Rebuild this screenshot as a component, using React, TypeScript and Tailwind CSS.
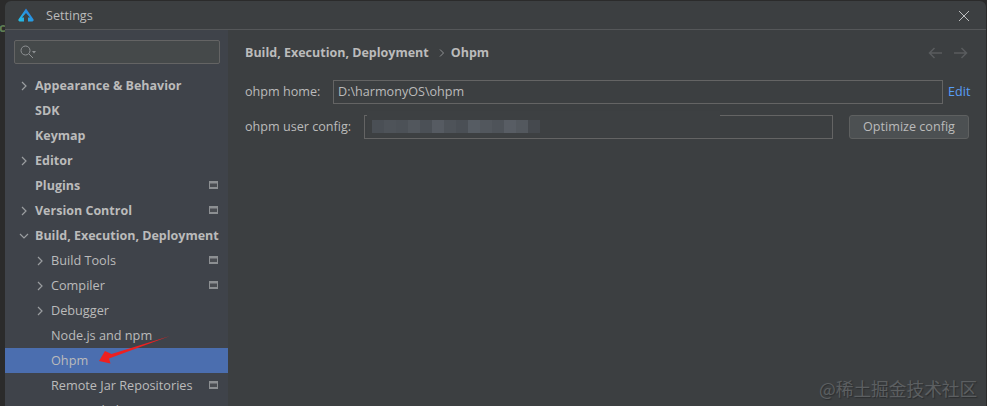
import React from "react";

const font = { fontFamily: '"Open Sans", "Noto Sans", sans-serif' };

function Chevron({ down }: { down?: boolean }) {
  return (
    <svg width="10" height="10" viewBox="0 0 10 10" fill="none" stroke="#9a9da0" strokeWidth="1.2">
      {down ? <path d="M1 3l4 4 4-4" /> : <path d="M3 1l4 4-4 4" />}
    </svg>
  );
}

function Badge() {
  return (
    <svg width="9" height="9" viewBox="0 0 9 9" className="shrink-0">
      <rect x="0" y="0" width="9" height="8" fill="#8c8f92" />
      <rect x="1" y="2.5" width="7" height="3.5" fill="#4a4d52" />
    </svg>
  );
}

type Row = { label: string; level: 0 | 1; chevron?: "r" | "d"; badge?: boolean; selected?: boolean };

const rows: Row[] = [
  { label: "Appearance & Behavior", level: 0, chevron: "r" },
  { label: "SDK", level: 0 },
  { label: "Keymap", level: 0 },
  { label: "Editor", level: 0, chevron: "r" },
  { label: "Plugins", level: 0, badge: true },
  { label: "Version Control", level: 0, chevron: "r", badge: true },
  { label: "Build, Execution, Deployment", level: 0, chevron: "d" },
  { label: "Build Tools", level: 1, chevron: "r", badge: true },
  { label: "Compiler", level: 1, chevron: "r", badge: true },
  { label: "Debugger", level: 1, chevron: "r" },
  { label: "Node.js and npm", level: 1 },
  { label: "Ohpm", level: 1, selected: true },
  { label: "Remote Jar Repositories", level: 1, badge: true },
  { label: "Required Plugins", level: 1 },
];

function TreeRow({ row }: { row: Row }) {
  return (
    <div className={`relative flex h-[25px] shrink-0 items-center pr-[10px] ${row.selected ? "bg-[#4b6eaf]" : ""}`}>
      <div className={`flex shrink-0 items-center ${row.level === 0 ? "w-[30px] pl-[14px]" : "w-[46px] pl-[30px]"}`}>
        {row.chevron ? <Chevron down={row.chevron === "d"} /> : null}
      </div>
      <span
        className={`flex-1 whitespace-nowrap leading-none text-[#bbbbbb] ${
          row.level === 0 ? "pt-[1px] text-[12.5px] font-bold" : "text-[12.7px]"
        }`}
      >
        {row.label}
      </span>
      {row.badge ? <Badge /> : null}
    </div>
  );
}

function RedArrow() {
  return (
    <svg width="80" height="40" viewBox="0 0 80 40" className="absolute left-[95px] top-[333px]">
      <path d="M75 3L16.5 21L10 18L4 28L15.5 30.5L14 25.5Z" fill="#ee2020" />
    </svg>
  );
}

export default function App() {
  return (
    <div style={font} className="relative h-[406px] w-[987px] overflow-hidden bg-[#2b2b2b] pl-[5px] pr-[1px] pt-[1px]">
      <span className="absolute left-[-1px] top-[18px] text-[13px] font-bold text-[#5f7f55]">c</span>
      <div className="relative flex h-[405px] w-[981px] flex-col overflow-hidden rounded-t-[6px] bg-[#3c3f41]">
        <div className="flex h-[29px] shrink-0 items-center border-b border-[#555759] pl-[13px] pr-[16px] pt-[1px]">
          <svg width="16" height="14" viewBox="0 0 16 14" className="-mt-[2px] shrink-0">
            <defs>
              <linearGradient id="lg" x1="0" y1="1" x2="1" y2="0">
                <stop offset="0" stopColor="#25c4e6" />
                <stop offset="1" stopColor="#2a6ddc" />
              </linearGradient>
            </defs>
            <path d="M8 0.5L15.6 11.5Q16 13 14.5 13.5H10V9.5H12L8 5L4 9.5H6V13.5H1.5Q0 13 0.4 11.5Z" fill="url(#lg)" />
          </svg>
          <span className="ml-[12px] mt-[1px] text-[12.6px] text-[#bbbbbb]">Settings</span>
          <svg width="12" height="12" viewBox="0 0 12 12" stroke="#bdbfc0" strokeWidth="1" className="ml-auto">
            <path d="M1 1l10 10M11 1L1 11" />
          </svg>
        </div>
        <div className="flex min-h-0 flex-1">
          <div className="flex w-[223px] shrink-0 flex-col overflow-hidden bg-[#3f434a]">
            <div className="shrink-0 pb-[9px] pl-[9px] pr-[8px] pt-[10px]">
              <div className="flex h-[24px] items-center rounded-[2px] border border-[#646464] bg-[#45494a] pl-[5px]">
                <svg width="16" height="14" viewBox="0 0 16 14" fill="none" stroke="#8f9294" strokeWidth="1">
                  <circle cx="5.5" cy="5.5" r="4.5" />
                  <path d="M9 9l4 4" />
                  <path d="M12 6h4l-2 2.5z" fill="#8f9294" stroke="none" />
                </svg>
              </div>
            </div>
            {rows.map((r) => (
              <TreeRow key={r.label} row={r} />
            ))}
          </div>
          <div className="flex min-w-0 flex-1 flex-col pl-[17px] pr-[17px] pt-[14px]">
            <div className="flex h-[18px] items-center text-[12.5px] font-bold text-[#bbbbbb]">
              <span>Build, Execution, Deployment</span>
              <svg width="6" height="8" viewBox="0 0 6 8" fill="none" stroke="#8f9294" className="ml-[10px] mr-[6px]">
                <path d="M1 0.5l3.5 3.5-3.5 3.5" />
              </svg>
              <span>Ohpm</span>
              <div className="ml-auto flex items-center gap-[12px] pr-[1px]">
                <svg width="14" height="12" viewBox="0 0 14 12" fill="none" stroke="#595c5e" strokeWidth="1.5">
                  <path d="M14 6H1.5M6.5 1l-5 5 5 5" />
                </svg>
                <svg width="14" height="12" viewBox="0 0 14 12" fill="none" stroke="#595c5e" strokeWidth="1.5">
                  <path d="M0 6h12.5M7.5 1l5 5-5 5" />
                </svg>
              </div>
            </div>
            <div className="mt-[18px] flex h-[24px] items-center text-[12.6px] text-[#bbbbbb]">
              <span className="w-[88px] shrink-0">ohpm home:</span>
              <div className="flex h-[24px] w-[610px] shrink-0 items-center border border-[#646464] bg-[#3c3f41] pl-[4px]">
                D:\harmonyOS\ohpm
              </div>
              <span className="ml-[5px] text-[#589df6]">Edit</span>
            </div>
            <div className="mt-[11px] flex h-[24px] items-center text-[12.6px] text-[#bbbbbb]">
              <span className="w-[119px] shrink-0">ohpm user config:</span>
              <div className="relative h-[24px] w-[469px] shrink-0 border border-[#646464] bg-[#3c3f41]">
                <div className="absolute left-[2px] top-[-5px] h-[26px] w-[353px] bg-[#3d4042]" />
                <div className="absolute left-[7px] top-[4px] flex h-[13px]">
                  {["#4a4f55","#4e5359","#4c5157","#52575d","#4b5056","#565b62","#4e5359","#4a4f55","#565c63","#52575d","#4e5359","#585d64","#53585e","#45494e"].map((c, i) => (
                    <div key={i} style={{ background: c }} className="h-full w-[12px]" />
                  ))}
                </div>
              </div>
              <button className="ml-[16px] h-[24px] w-[120px] shrink-0 rounded-[3px] border border-[#5e6060] bg-[#4c5052] text-[#bbbbbb]">
                Optimize config
              </button>
            </div>
          </div>
        </div>
      </div>
      <RedArrow />
      <div
        className="absolute left-[819px] top-[375px] whitespace-nowrap text-[17.7px] text-[#5c5f61] [text-shadow:1px_1px_1px_#2c2e30]"
        style={{ fontFamily: '"Noto Sans CJK SC", sans-serif' }}
      >
        @稀土掘金技术社区
      </div>
    </div>
  );
}
